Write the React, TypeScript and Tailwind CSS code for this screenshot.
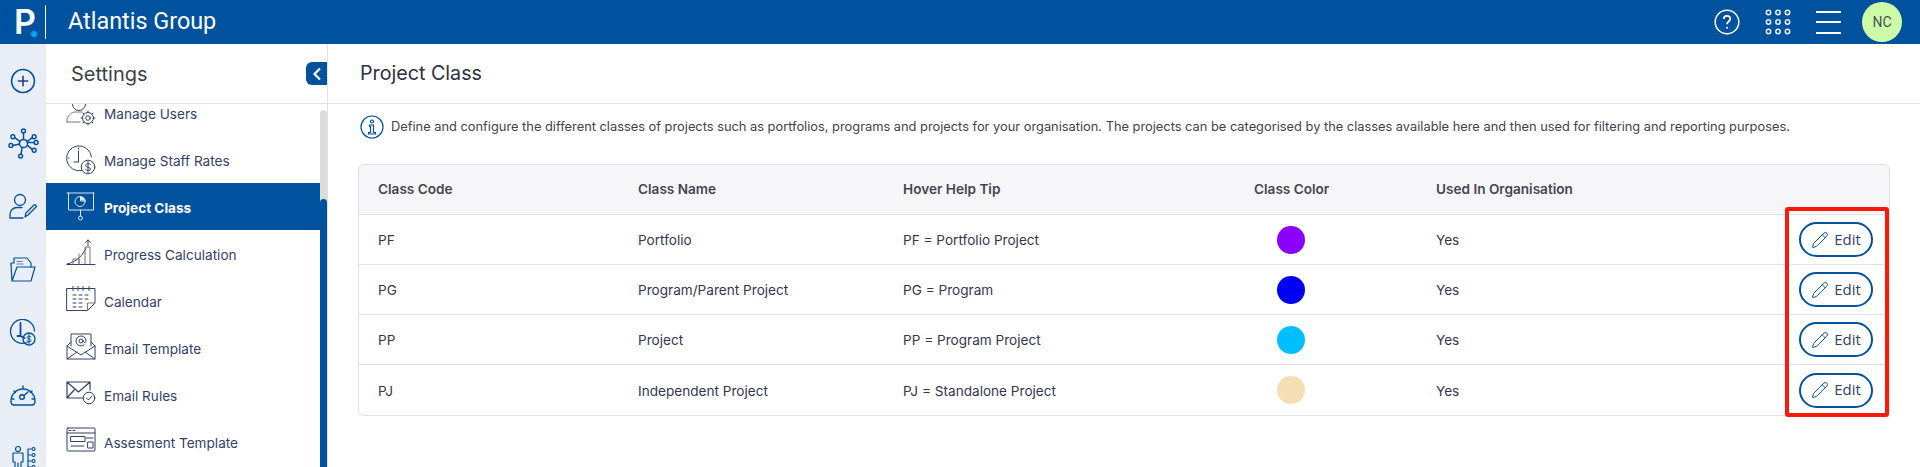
import { Pencil } from 'lucide-react'
import type { ReactNode } from 'react'

const BLUE = '#00519e'

function Ico({ size = 30, vb = 30, children, color = '#33406b' }: { size?: number; vb?: number; children: ReactNode; color?: string }) {
  return (
    <svg width={size} height={size} viewBox={`0 0 ${vb} ${vb}`} fill="none" stroke={color} strokeWidth={1} strokeLinecap="round" strokeLinejoin="round">
      {children}
    </svg>
  )
}

const railIcons: ReactNode[] = [
  <Ico size={26} vb={28} color={BLUE}>
    <g strokeWidth={1.7}>
      <circle cx="14" cy="14" r="12.300" />
      <path d="M14 9v10M9 14h10" stroke="#2a3f7e" />
    </g>
  </Ico>,
  <Ico size={31} vb={32} color={BLUE}>
    <g strokeWidth={1.5}>
      <circle cx="16" cy="16" r="4.200" />
      <circle cx="5" cy="9" r="2" />
      <circle cx="16" cy="3" r="2" />
      <circle cx="27" cy="9" r="2" />
      <circle cx="3" cy="18" r="2" />
      <circle cx="13" cy="29" r="2" />
      <circle cx="27" cy="23" r="2" />
      <circle cx="29" cy="15" r="2" />
      <path d="M7 10l5.500 4M16 5v7M25 10l-5.500 4M5 18l7-1.500M13.500 27l1-7M25 22l-5-4M27 15h-7" />
    </g>
  </Ico>,
  <Ico size={28} vb={28} color={BLUE}>
    <g strokeWidth={1.300}>
      <circle cx="11" cy="7" r="5.500" />
      <path d="M1 25v-3.500c0-4 3-7 7-7h5M1 25h13" />
      <path d="M16 24l1-4 8-8c1-1 3 1 2 2l-8 8z" />
    </g>
  </Ico>,
  <Ico size={28} vb={28} color={BLUE}>
    <g strokeWidth={1.200}>
      <path d="M2 8v-1h3M5 7V2h13l4 5v4" />
      <path d="M8 5.500h5M8 8h6" stroke="#5f7fb0" />
      <path d="M2 8l1 17h19l4-14H8l-5 14" />
    </g>
  </Ico>,
  <Ico size={28} vb={28} color={BLUE}>
    <g strokeWidth={1.300}>
      <path d="M18 23.500A12 12 0 1 1 25.500 12" />
      <path d="M11.500 4v13h-3M11.500 17l4 2" strokeWidth={1.800} />
      <circle cx="20" cy="20" r="6" />
      <path d="M22 18c-1-1.500-4-1-4 .5s4 1.500 4 3-3 1.500-4 .5M20 15.500v9" strokeWidth={1} />
    </g>
  </Ico>,
  <Ico size={28} vb={28} color={BLUE}>
    <g strokeWidth={1.400}>
      <path d="M5 23h18c2 0 3-2 3-4A12 12 0 0 0 2 19c0 2 1 4 3 4z" />
      <circle cx="13" cy="15" r="2.300" />
      <path d="M15 13.500l4-3.500M14 4v2M5 9l1.500 1.500M23 9l-1.500 1.500M3 17h2M23 17h2" />
    </g>
  </Ico>,
  <Ico size={28} vb={28} color={BLUE}>
    <g strokeWidth={1.200}>
      <circle cx="9" cy="4" r="2.500" />
      <path d="M4 8h10v9h-2v10H6V17H4zM9 18v9" />
      <path d="M19 4v20M19 4h3M19 10h3M19 16h3M19 22h3" />
      <circle cx="24.500" cy="4" r="1.500" />
      <circle cx="24.500" cy="10" r="1.500" />
      <circle cx="24.500" cy="16" r="1.500" />
      <circle cx="24.500" cy="22" r="1.500" />
    </g>
  </Ico>,
]

const menuIcon = (name: string, active: boolean) => {
  const c = active ? '#dbe6f3' : '#33406b'
  switch (name) {
    case 'users':
      return (
        <Ico color={c}>
          <circle cx="13" cy="6" r="6.500" />
          <path d="M1 24v-2c0-4 4-7 7-8h8M1 24h13" stroke="#8b6f7b" />
          <circle cx="22" cy="20" r="5.500" />
          <circle cx="22" cy="20" r="2.300" />
          <path d="M22 13v1.500M22 25.500V27M15 20h1.500M27.500 20H29M17 15l1 1M26 24l1 1M27 15l-1 1M18 24l-1 1" />
        </Ico>
      )
    case 'rates':
      return (
        <Ico color={c}>
          <path d="M16 25.500A12.500 12.500 0 1 1 25.500 12" />
          <path d="M12.500 3v1M12.500 6v11H8M2 13h1" />
          <circle cx="22" cy="22" r="6.800" />
          <path d="M24.500 19.500c-1-1.500-5-1-5 1s5 1.500 5 3.500-4 2-5 .5M22 16.500v11" />
        </Ico>
      )
    case 'class':
      return (
        <Ico color={c}>
          <path d="M1 1h27M2.500 1v17h25V1M14.500 18v6" />
          <circle cx="14.500" cy="26" r="2" />
          <circle cx="14" cy="9.500" r="5" />
          <path d="M14.500 4.500v4.500h5" />
          <path d="M15.500 5v3h3.500a4 4 0 0 0-3.500-3z" fill={c} />
        </Ico>
      )
    case 'progress':
      return (
        <Ico color={c}>
          <path d="M1 25.500h28" strokeWidth={1.200} />
          <path d="M1 25c10-2 16-9 19-16" />
          <path d="M7 25v-5h6v5M13 25V15M19 25V8h5v17" stroke="#8b6f7b" />
          <path d="M22 7V1M19.500 3.500L22 1l2.500 2.500" />
        </Ico>
      )
    case 'calendar':
      return (
        <Ico color={c}>
          <path d="M1 2.500h28V17l-7.500 7.500H1z" />
          <path d="M7 0.500v4M12 .5v4M17 .5v4M23 .5v4" />
          <path d="M7 9h3M13 9h3M19 9h3M7 13h3M13 13h3M19 13h3M7 17h3M13 17h3M7 21h3M13 21h3" />
          <path d="M21.500 24.500V17H29" stroke="#8b6f7b" />
        </Ico>
      )
    case 'template':
      return (
        <Ico color={c}>
          <path d="M5 13V1h20v12" />
          <circle cx="15" cy="8" r="2" />
          <path d="M17 8c0 2 3 2 3 0a5 5 0 1 0-2 4" />
          <path d="M5 9L1 13v13h28V13l-4-4M1 13l14 9 14-9M1 26l10-7M29 26l-10-7" />
        </Ico>
      )
    case 'rules':
      return (
        <Ico color={c}>
          <path d="M24 10V2H1v16h16M1 2l11.500 10L24 2M1 18l8-9" strokeWidth={1.200} />
          <circle cx="23" cy="18" r="5.800" />
          <path d="M20.500 18l2 2 3.500-4" />
        </Ico>
      )
    default:
      return (
        <Ico color={c}>
          <rect x="1" y="1" width="28" height="23" rx="1" />
          <path d="M1 6h28M3 3.500h2M7 3.500h2M5 9.500h14v5H5zM20 11h7M5 19h13M22 15h5v6h-5z" />
        </Ico>
      )
  }
}

const menu = [
  ['Manage Users', 'users'],
  ['Manage Staff Rates', 'rates'],
  ['Project Class', 'class'],
  ['Progress Calculation', 'progress'],
  ['Calendar', 'calendar'],
  ['Email Template', 'template'],
  ['Email Rules', 'rules'],
  ['Assesment Template', 'assess'],
]

const rows = [
  ['PF', 'Portfolio', 'PF = Portfolio Project', 'bg-[#8b00ff]'],
  ['PG', 'Program/Parent Project', 'PG = Program', 'bg-[#0000f5]'],
  ['PP', 'Project', 'PP = Program Project', 'bg-[#00bfff]'],
  ['PJ', 'Independent Project', 'PJ = Standalone Project', 'bg-[#f5deb3]'],
]

const cols = 'grid grid-cols-[260px_265px_351px_182px_1fr] items-center pl-[19px]'

export default function App() {
  return (
    <div className="h-[467px] w-[1920px] overflow-hidden bg-white font-['Inter',sans-serif] text-[#33364f]">
      {/* Top bar */}
      <div className="flex h-[44px] items-center bg-[#00519e] text-white">
        <div className="relative flex h-[34px] w-[46px] items-center border-r border-white pl-[14px] text-[34px] font-semibold leading-none">
          <span>P</span>
          <span className="absolute left-[31px] top-[26px] h-[6px] w-[6px] rounded-full bg-[#0aa5f0]" />
        </div>
        <div className="ml-[22px] -mt-[1px] font-['Roboto',sans-serif] text-[23.4px]">Atlantis Group</div>
        <div className="ml-auto flex items-center pr-[18px]">
          <svg width="26" height="26" viewBox="0 0 26 26" fill="none" stroke="white" strokeWidth="1.500">
            <circle cx="13" cy="13" r="11.800" />
            <path d="M9.800 10c0-4.200 6.400-4.200 6.400 0 0 2.500-3.200 2.500-3.200 5.200" strokeWidth="1.800" />
            <circle cx="13" cy="18.800" r="1" fill="white" stroke="none" />
          </svg>
          <svg className="ml-[25px]" width="26" height="26" viewBox="0 0 26 26" fill="none" stroke="#e8f0fa" strokeWidth="1.500">
            {[3.500, 13, 22.500].map((y) =>
              [3.500, 13, 22.500].map((x) => <circle key={`${x}-${y}`} cx={x} cy={y} r="2.200" />),
            )}
          </svg>
          <div className="ml-[25px] flex w-[25px] flex-col gap-[8.500px]">
            <div className="h-[2px] bg-white" />
            <div className="h-[2px] bg-white" />
            <div className="h-[2px] bg-white" />
          </div>
          <div className="ml-[21px] flex h-[40px] w-[40px] items-center justify-center rounded-full bg-[#cdfca9] font-['Roboto',sans-serif] text-[14px] text-[#4a4f55]">
            NC
          </div>
        </div>
      </div>

      <div className="flex h-[423px]">
        {/* Icon rail */}
        <div className="flex w-[46px] shrink-0 flex-col items-center overflow-hidden bg-[#e9edf5] pt-[5px]">
          {railIcons.map((icon, i) => (
            <div key={i} className="flex h-[63px] shrink-0 items-center justify-center">
              {icon}
            </div>
          ))}
        </div>

        {/* Settings sidebar */}
        <div className="flex w-[282px] shrink-0 flex-col border-r border-[#e2e2e2]">
          <div className="flex h-[60px] shrink-0 items-center justify-between border-b border-[#e2e2e2] pl-[25px]">
            <span className="text-[20px] text-[#3c3f4a]">Settings</span>
            <button className="flex h-[23px] w-[21px] items-center justify-center rounded-l-[6px] bg-[#00519e]">
              <svg width="10" height="14" viewBox="0 0 10 14" fill="none" stroke="white" strokeWidth="2.200">
                <path d="M8 1.500L2.500 7 8 12.500" />
              </svg>
            </button>
          </div>
          <div className="flex min-h-0 flex-1">
            <div className="min-w-0 flex-1 overflow-hidden">
              <div className="-mt-[15px]">
                {menu.map(([label, icon]) => {
                  const active = label === 'Project Class'
                  return (
                    <div
                      key={label}
                      className={`flex h-[47px] items-center gap-[8px] pl-[20px] text-[13.6px] ${
                        active ? 'bg-[#00519e] font-bold text-white' : 'text-[#33406b]'
                      }`}
                    >
                      {menuIcon(icon, active)}
                      <span className="pt-[3px]">{label}</span>
                    </div>
                  )
                })}
              </div>
            </div>
            <div className="mt-[6px] flex w-[7px] shrink-0 flex-col overflow-hidden rounded-t-full bg-[#dcdcdc]">
              <div className="mt-[89px] flex-1 rounded-t-full bg-[#00519e]" />
            </div>
          </div>
        </div>

        {/* Content */}
        <div className="relative min-w-0 flex-1">
          <div className="flex h-[60px] items-center border-b border-[#e2e2e2] pl-[32px] text-[19.7px] text-[#2d3040]">
            <span className="pt-[1px]">Project Class</span>
          </div>
          <div className="flex items-center gap-[7px] pl-[32px] pt-[11px] text-[12.83px] text-[#40434f]">
            <svg width="24" height="24" viewBox="0 0 24 24" fill="none" stroke="#00519e" strokeWidth="1.200">
              <circle cx="12" cy="12" r="11" />
              <circle cx="12" cy="6.500" r="1.500" />
              <path d="M9.500 10h4v7.500h2v1.500h-7v-1.500h2v-6h-1z" />
            </svg>
            <span className="whitespace-nowrap">
              Define and configure the different classes of projects such as portfolios, programs and projects for your organisation. The projects can be categorised by the classes available here and then used for filtering and reporting purposes.
            </span>
          </div>

          {/* Table */}
          <div className="ml-[30px] mr-[30px] mt-[25px] overflow-hidden rounded-[6px] border border-[#e2e2e2] text-[13.6px]">
            <div className={`${cols} h-[50px] border-b border-[#e2e2e2] bg-[#f6f6f8] font-semibold text-[#444650]`}>
              <div>Class Code</div>
              <div>Class Name</div>
              <div>Hover Help Tip</div>
              <div>Class Color</div>
              <div>Used In Organisation</div>
            </div>
            {rows.map(([code, name, tip, color], i) => (
              <div key={code} className={`${cols} h-[50px] ${i < rows.length - 1 ? 'border-b border-[#e2e2e2]' : ''}`}>
                <div className="pt-[2px]">{code}</div>
                <div className="pt-[2px]">{name}</div>
                <div className="pt-[2px]">{tip}</div>
                <div className="pl-[23px]">
                  <div className={`h-[28px] w-[28px] rounded-full ${color}`} />
                </div>
                <div className="flex items-center justify-between pr-[16px]">
                  <span className="pt-[2px]">Yes</span>
                  <button className="flex h-[35px] w-[74px] items-center justify-center gap-[5px] rounded-full border-2 border-[#00519e] font-['Open_Sans',sans-serif] text-[15px] text-[#33406b]">
                    <Pencil size={18} strokeWidth={1.300} className="text-[#00519e]" />
                    <span className="-mt-[1px]">Edit</span>
                  </button>
                </div>
              </div>
            ))}
          </div>

          {/* Red annotation box */}
          <div className="absolute left-[1457px] top-[163px] h-[210px] w-[104px] rounded-[3px] border-[4px] border-[#fb1a0a]" />
        </div>
      </div>
    </div>
  )
}
